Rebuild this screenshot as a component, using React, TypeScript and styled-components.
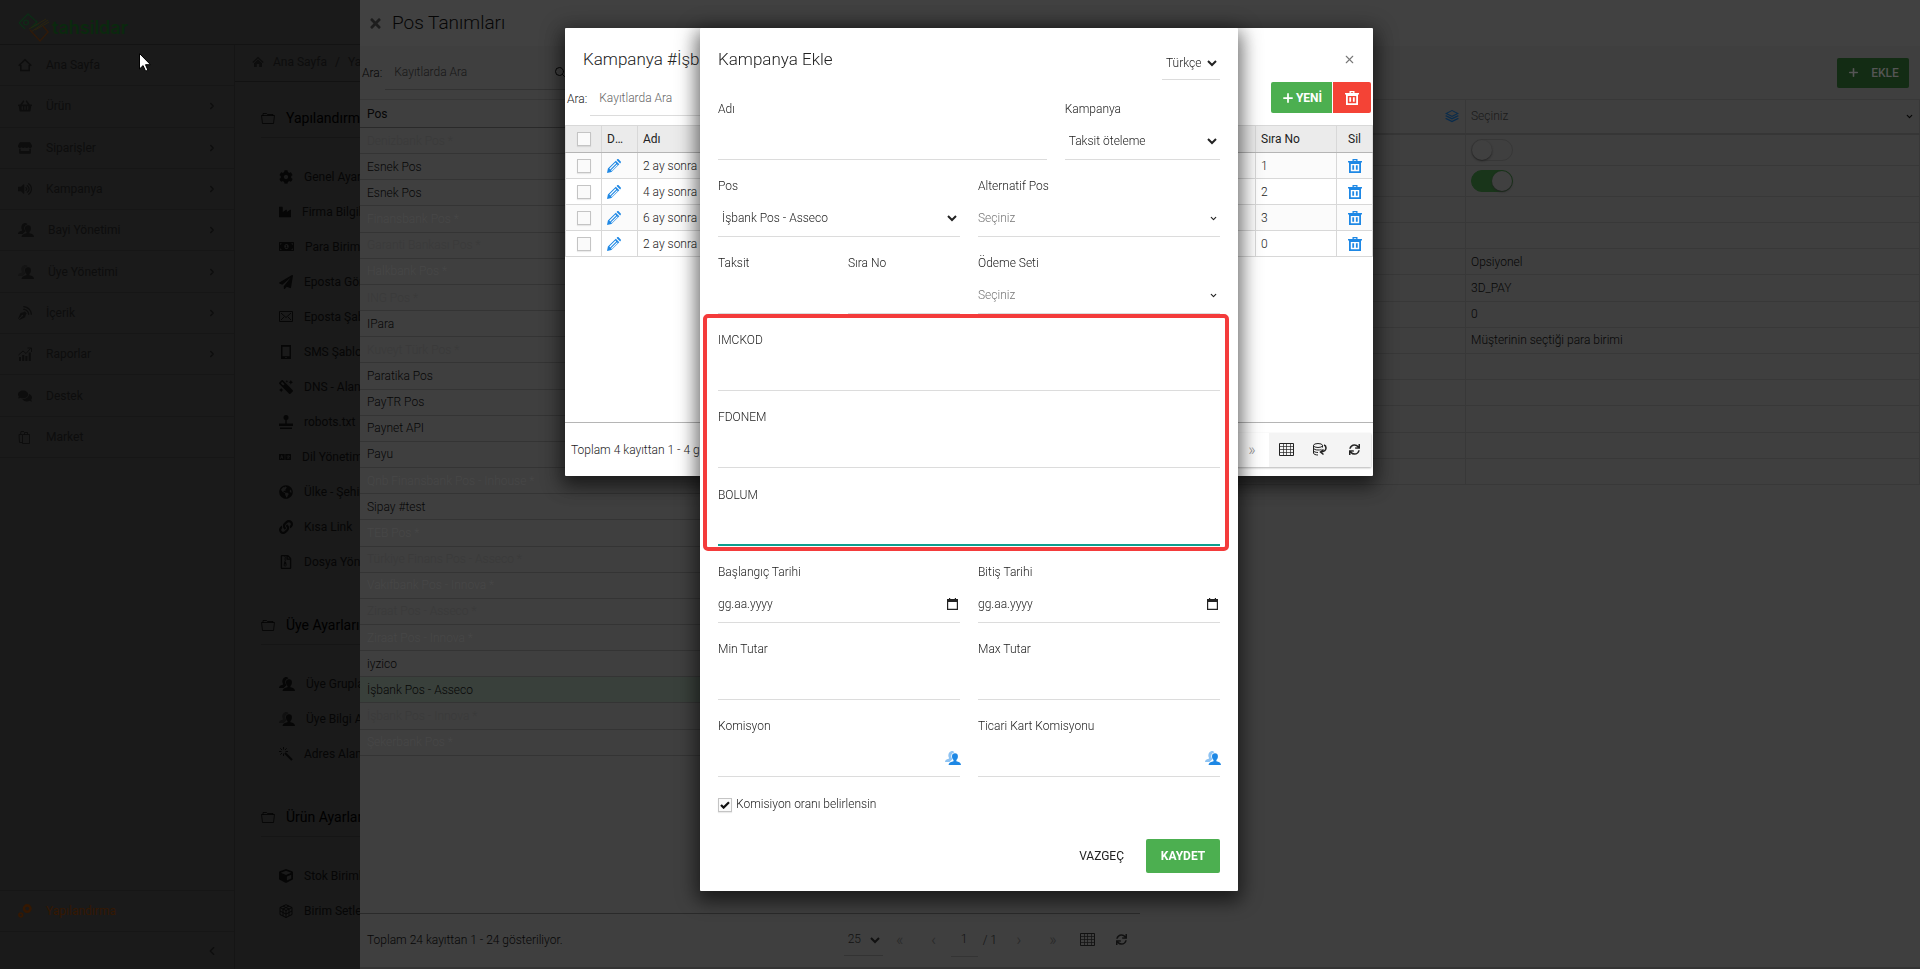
import React, { useId } from "react";
import styled, { createGlobalStyle, css } from "styled-components";
import {
  FaCog,
  FaComments,
  FaCube,
  FaGlobeAmericas,
  FaIndustry,
  FaLink,
  FaMagic,
  FaMoneyBillAlt,
  FaPaperPlane,
  FaRegFileArchive,
  FaShoppingBasket,
  FaStore,
  FaSync,
  FaTimes,
  FaVolumeUp,
  FaLanguage,
} from "react-icons/fa";
import { ImBlog, ImStack } from "react-icons/im";
import { ChevronDown, ChevronLeft, ChevronRight, Plus, Search, X } from "lucide-react";

const GlobalStyle = createGlobalStyle`
  *, *::before, *::after { box-sizing: border-box; }
  body {
    margin: 0;
    background: #1a1a1a;
    font-family: Roboto, "Liberation Sans", sans-serif;
    font-size: 12px;
    line-height: 20px;
    color: #333;
  }
  button, input, select { font: inherit; color: inherit; }
  button { cursor: pointer; border: 0; background: none; padding: 0; }
  a { color: inherit; text-decoration: none; }
  ul { list-style: none; margin: 0; padding: 0; }
  h1, h2, h3, p { margin: 0; font-weight: inherit; }
  svg { display: block; flex: none; }
`;

/* ---------- icons ---------- */

const HomeIcon = () => (
  <svg width="14" height="14" viewBox="0 0 14 14" fill="none" stroke="currentColor" strokeWidth="1.5">
    <path d="M.7 7.8 7 1.8l6.3 6M2.8 7v5.6h8.4V7" />
  </svg>
);

const SolidHomeIcon = () => (
  <svg width="12" height="12" viewBox="0 0 12 12" fill="currentColor">
    <path d="M6 .8 11.6 6l-.8.9L6 2.6 1.2 6.900.4 6zM6 3.600 10 7.200V11H7.200V8H4.800v3H2V7.200z" />
  </svg>
);

const PeopleIcon = ({ faded = false }: { faded?: boolean }) => (
  <svg width="16" height="14" viewBox="0 0 16 14" fill="currentColor">
    <path
      opacity={faded ? 0.5 : 1}
      d="M6 .3c1.500-.5 3 0 3.300 1.300C7 1.800 6.200 3.600 6.300 5.400c.1 1.200.5 2.100 1.100 2.900L4.600 10.900H0c0-1.600 1-2.400 3.900-3.200V6.500C3 5.500 2.900 1.200 6 .3z"
    />
    <path d="M10 2.200c1.900 0 2.900 1.200 2.900 3 0 1.600-.6 3-1.500 3.700v1.300c2.900.6 4.400 1.500 4.600 3.800H3.600c.2-2.300 1.900-3.200 4.900-3.800V8.900C7.600 8.200 7 6.800 7 5.200c0-1.800 1.100-3 3-3z" />
  </svg>
);

const ReportIcon = () => (
  <svg width="14" height="14" viewBox="0 0 14 14" fill="currentColor">
    <path d="M1 10h2v4H1zM4.200 8h2v6h-2zM7.400 9h2v5h-2zM10.800 5.500h2V14h-2z" />
    <path d="M.5 8 5 4l3 2.500L12.500 1.500M9.500 1h4v4" fill="none" stroke="currentColor" />
  </svg>
);

const BagsIcon = () => (
  <svg width="14" height="14" viewBox="0 0 14 14" fill="none" stroke="currentColor">
    <path d="M4.500 4.500h7v9h-7zM6.500 4.500v-2h3v2M4.500 12.500h-3l-.5-8h3M2.500 4.500l.5-3h3" />
  </svg>
);

const GearsIcon = () => (
  <svg width="14" height="14" viewBox="0 0 14 14" fill="none" stroke="currentColor">
    <circle cx="9.200" cy="4.600" r="3.200" strokeWidth="2.600" />
    <circle cx="2.800" cy="11" r="1.800" strokeWidth="1.800" />
  </svg>
);

const FolderIcon = () => (
  <svg width="14" height="12" viewBox="0 0 14 12" fill="none" stroke="currentColor" strokeOpacity="0.7">
    <path d="M.5 3.500h13l-1 8h-11zM2 3.500v-2h3.500l1 1H12v1" />
  </svg>
);

const EnvelopeIcon = () => (
  <svg width="14" height="11" viewBox="0 0 14 11" fill="none" stroke="currentColor">
    <path d="M.5.5h13v10H.5zM2 2l5 4.500L12 2M2 9l3-3M12 9 9 6" />
  </svg>
);

const TabletIcon = () => (
  <svg width="14" height="14" viewBox="0 0 14 14" fill="currentColor">
    <path fillRule="evenodd" d="M2 0h10v14H2zM3.500 1.800v9.400h7V1.800zM6.300 12v1h1.400v-1z" />
  </svg>
);

const StampIcon = () => (
  <svg width="14" height="14" viewBox="0 0 14 14" fill="currentColor">
    <circle cx="7" cy="2.500" r="2.500" />
    <path d="M6.300 4h1.400v4.500H14V11H0V8.500h6.300zM1 12.500h12V14H1z" />
  </svg>
);

const WandIcon = () => (
  <svg width="14" height="14" viewBox="0 0 14 14" fill="none" stroke="currentColor">
    <path d="M6 6l7 7" strokeWidth="2" />
    <path d="M4.500 0v2.500M4.500 6.500V9M0 4.500h2.500M6.500 4.500H9M1.300 1.300 3 3M7.700 1.300 6 3M1.300 7.700 3 6" />
  </svg>
);

const CubesIcon = () => (
  <svg width="14" height="14" viewBox="0 0 14 14" fill="none" stroke="currentColor">
    <path d="M7 .7 13 3.500v7l-6 3-6-3v-7zM1 3.500l6 3 6-3M7 6.500v7M4 2l6 3v7M10 2 4 5v7M1 7l6 3 6-3" />
  </svg>
);

const PencilIcon = () => (
  <svg width="14" height="14" viewBox="0 0 14 14">
    <path fill="#1e88e5" fillRule="evenodd" d="M0 14 .9 9.600 8.800 1.700l3.500 3.500-7.900 7.900zM2.400 9.600l.8.800 6-6-.8-.8zM4 11.200l.7.700 6-6-.7-.7zM9.600.9l.6-.6c.5-.4 1-.4 1.400 0l2.100 2.100c.4.400.4.900 0 1.400l-.6.6z" />
  </svg>
);

const TrashIcon = () => (
  <svg width="14" height="14" viewBox="0 0 14 14" fill="currentColor">
    <path fillRule="evenodd" d="M4.500 0h5v2H14v1.600h-1V14H1V3.600H0V2h4.500zM5.800 1.200V2h2.400v-.8zM2.800 5v7.300h8.400V5z" />
    <path d="M4.300 6.200h1.800v4.600H4.300zM7.900 6.200h1.800v4.600H7.900z" />
  </svg>
);

const GridIcon = () => (
  <svg width="15" height="13" viewBox="0 0 15 13" fill="none" stroke="currentColor">
    <path d="M.5.500h14v12H.5z" />
    <path d="M.5 3.500h14M.5 6.500h14M.5 9.500h14M4.500.500v12M7.500.500v12M11.500.500v12" strokeOpacity="0.7" />
  </svg>
);

const DatabaseIcon = () => (
  <svg width="14" height="13" viewBox="0 0 14 13" fill="none" stroke="currentColor">
    <ellipse cx="5" cy="2.500" rx="4.500" ry="2" />
    <path d="M.5 2.500v7.500c0 1.200 2 2 4.500 2M9.500 2.500v2M.5 5c0 1.200 2 2 4.500 2s3-.3 3.500-.7M.5 7.500c0 1.200 2 2 4.500 2" />
    <path d="M11 2c2.500 1 3.500 6-2.500 7M10.500 6.500 7.500 9l3 2.500" strokeWidth="1.500" />
  </svg>
);

const CalendarIcon = () => (
  <svg width="11" height="12" viewBox="0 0 11 12">
    <path fill="#222" fillRule="evenodd" d="M2 0h1.200v1h4.600V0H9v1h2v11H0V1h2zM1.200 4v6.800h8.600V4z" />
  </svg>
);

const CheckIcon = () => (
  <svg width="10" height="8" viewBox="0 0 10 8" fill="none" stroke="#111" strokeWidth="2.200">
    <path d="M1 4l2.600 2.600L9 1.200" />
  </svg>
);

const LogoMark = () => (
  <svg width="32" height="30" viewBox="0 0 32 30" fill="none">
    <path d="M1 10 10 1l9 8-6 6 8-4M1 10l6 6" stroke="#0d2c16" strokeWidth="1.500" />
    <circle cx="8" cy="9.500" r="2.400" stroke="#0d2c16" strokeWidth="1.300" />
    <path d="M30 7 13 19M28 6 11 16M31 9 17 17" stroke="#2a240f" />
    <path d="M12 17 22 28l8-9-5-6" stroke="#301a09" strokeWidth="1.500" />
  </svg>
);

/* ---------- background page ---------- */

const Page = styled.div`
  min-height: 100vh;
  display: flex;
  flex-direction: column;
  color: #0d0d0d;
`;

const TopBar = styled.header`
  height: 45px;
  padding: 13px 18px 0;
  display: flex;
  align-items: flex-start;
  gap: 2px;
  border-bottom: 1px solid #131313;
`;

const Brand = styled.span`
  padding-top: 5px;
  font-family: Inter, Roboto, sans-serif;
  font-size: 18px;
  font-weight: 600;
  color: #0a290e;
`;

const Columns = styled.div`
  flex: 1;
  display: flex;
`;

const Sidebar = styled.nav`
  width: 235px;
  display: flex;
  flex-direction: column;
  border-right: 1px solid #151515;
`;

const Menu = styled.ul`
  display: grid;
  grid-auto-rows: 1fr;
  min-height: 413px;
`;

const MenuItem = styled.li<{ $active?: boolean; $top?: boolean }>`
  display: flex;
  border-bottom: 1px solid #161616;
  ${(p) => p.$top && css`margin-top: auto; border-top: 1px solid #161616; height: 42px;`}
  color: ${(p) => (p.$active ? "#351802" : "inherit")};
`;

const MenuLink = styled.a`
  flex: 1;
  display: flex;
  align-items: center;
  gap: 14px;
  padding: 0 17px 0 18px;
  & > span { flex: 1; }
`;

const Collapse = styled.button`
  height: 37px;
  padding: 0 15px;
  display: flex;
  align-items: center;
  justify-content: flex-end;
`;

const Content = styled.main`
  flex: 1;
`;

const Breadcrumb = styled.div`
  height: 37px;
  padding: 0 17px 2px;
  display: flex;
  align-items: center;
  gap: 8px;
  border-bottom: 1px solid #121212;
  & > a:first-child { display: flex; gap: 9px; align-items: center; }
`;

const Section = styled.section`
  padding: 24px 26px 0;
`;

const SectionTitle = styled.h2`
  height: 32px;
  display: flex;
  align-items: flex-start;
  gap: 11px;
  font-size: 14px;
  line-height: 24px;
  font-weight: 400;
  color: #000;
  border-bottom: 1px solid #151515;
  & > svg { margin-top: 6px; }
`;

const SettingList = styled.ul`
  padding: 21px 18px 10px;
`;

const SettingLink = styled.a`
  height: 35px;
  display: flex;
  align-items: center;
  gap: 11px;
  color: #060606;
`;

/* ---------- drawer ---------- */

const Drawer = styled.section`
  position: fixed;
  inset: 0 0 0 360px;
  display: flex;
  flex-direction: column;
  background: #3f3f3f;
  color: #060606;
  font-weight: 300;
`;

const DrawerHead = styled.header`
  height: 46px;
  padding: 0 8px;
  display: flex;
  align-items: center;
  gap: 9px;
  background: #414141;
  & h1 { font-size: 19px; line-height: 24px; color: #060606; }
  & button { color: #1d1d1d; }
`;

const DrawerBody = styled.div`
  flex: 1;
  display: flex;
`;

const ListPane = styled.div`
  flex: 1;
  min-width: 0;
  display: flex;
  flex-direction: column;
  border-bottom: 2px solid #343434;
`;

const DetailPane = styled.div`
  flex: 1;
  min-width: 0;
  border-bottom: 2px solid #343434;
`;

const SearchBar = styled.div<{ $dark?: boolean }>`
  display: flex;
  align-items: center;
  gap: 3px;
  padding: 0 2px;
  & > div {
    width: 183px;
    display: flex;
    align-items: center;
    padding: 0 2px 0 9px;
    border-bottom: 1px solid ${(p) => (p.$dark ? "#323232" : "#dcdcdc")};
  }
  & input {
    flex: 1;
    min-width: 0;
    height: 34px;
    padding: 0;
    border: 0;
    outline: 0;
    background: transparent;
  }
  & input::placeholder { color: ${(p) => (p.$dark ? "#171717" : "#666")}; opacity: 1; }
`;

const DrawerTools = styled.div`
  height: 53px;
  padding: 0 11px 0 0;
  display: flex;
  align-items: center;
  justify-content: space-between;
`;

const PosTable = styled.table`
  width: 100%;
  height: 657px;
  border-collapse: collapse;
  border-top: 1px solid #373737;
  & th {
    height: 28px;
    padding: 0 7px;
    text-align: left;
    font-weight: 400;
    border-bottom: 1px solid #2a2a2a;
  }
  & td { padding: 0 7px; border-bottom: 1px solid #343434; }
`;

const PosRow = styled.tr<{ $tone: Tone }>`
  color: ${(p) => ({ normal: "#060606", soft: "#474747", ghost: "#3a3a3a", selected: "#060606" })[p.$tone]};
  background: ${(p) => (p.$tone === "selected" ? "#39403b" : "transparent")};
`;

const PagerBar = styled.footer`
  display: flex;
  align-items: center;
  justify-content: space-between;
`;

const DrawerPager = styled(PagerBar)`
  margin-top: auto;
  height: 54px;
  padding: 0 2px 2px 7px;
  border-top: 1px solid #2a2a2a;
`;

const PagerControls = styled.div`
  display: flex;
  align-items: center;
  color: #111;
`;

const PageCount = styled.span`
  margin: 0 5px;
`;

const PagerButton = styled.button<{ $muted?: boolean; $fill?: string }>`
  width: 34px;
  height: 34px;
  display: flex;
  align-items: center;
  justify-content: center;
  font-size: 16px;
  background: ${(p) => p.$fill ?? "transparent"};
  opacity: ${(p) => (p.$muted ? 0.5 : 1)};
`;

const PageSize = styled.select`
  width: 39px;
  height: 32px;
  padding: 0;
  border: 0;
  border-bottom: 1px solid #333;
  background: transparent;
`;

const PageInput = styled.input`
  width: 27px;
  height: 34px;
  padding: 0;
  text-align: center;
  border: 0;
  border-bottom: 1px solid #343434;
  background: transparent;
`;

const PropTable = styled.table`
  width: 100%;
  height: 386px;
  border-collapse: collapse;
  table-layout: fixed;
  & td {
    padding: 0 5px;
    border: 1px solid #383838;
  }
`;

const PropRow = styled.tr<{ $height: number; $head?: boolean }>`
  & > td {
    height: ${(p) => p.$height}px;
    ${(p) => p.$head && css`border-bottom: 2px solid #363636;`}
  }
`;

const LayersCell = styled.div`
  display: flex;
  justify-content: flex-end;
  padding-right: 1px;
  color: #0a2c4c;
`;

const DarkSelect = styled.div`
  display: flex;
  align-items: center;
  & > select {
    flex: 1;
    appearance: none;
    height: 30px;
    padding: 0;
    border: 0;
    background: transparent;
    color: #1a1a1a;
  }
`;

const Toggle = styled.input`
  appearance: none;
  display: block;
  width: 42px;
  height: 22px;
  margin: 0;
  border-radius: 11px;
  border: 1px solid #373737;
  &::before {
    content: "";
    display: block;
    width: 20px;
    height: 20px;
    border-radius: 50%;
    background: #404040;
    box-shadow: 0 1px 2px #222;
  }
  &:checked { background: #19351a; border-color: #19351a; }
  &:checked::before { margin-left: 20px; }
`;

const AddButton = styled.button`
  width: 72px;
  height: 30px;
  display: flex;
  align-items: center;
  justify-content: center;
  gap: 11px;
  border-radius: 2px;
  background: #132c14;
  color: #555;
  font-weight: 500;
`;

/* ---------- dialogs ---------- */

const Overlay = styled.div`
  position: fixed;
  inset: 0;
  padding: 28px 0 0 18px;
  display: flex;
  align-items: flex-start;
  justify-content: center;
`;

const Dialog = styled.section<{ $width: number }>`
  width: ${(p) => p.$width}px;
  background: #fff;
  color: #222;
  font-weight: 300;
  border-radius: 1px;
  box-shadow: 0 8px 17px 2px rgba(0, 0, 0, 0.4), 0 4px 22px 4px rgba(0, 0, 0, 0.3);
`;

const DialogTitle = styled.h2`
  font-size: 17px;
  line-height: 26px;
  color: #222;
`;

const ListDialogHead = styled.header`
  height: 53px;
  padding: 9px 17px 0 18px;
  display: flex;
  align-items: center;
  justify-content: space-between;
  & button { color: #777; }
`;

const ListTools = styled.div`
  height: 44px;
  padding-right: 2px;
  display: flex;
  align-items: flex-start;
  justify-content: space-between;
`;

const ButtonGroup = styled.div`
  display: flex;
  gap: 1px;
  & > button {
    height: 31px;
    margin-top: 1px;
    display: flex;
    align-items: center;
    justify-content: center;
    color: #fff;
    font-weight: 700;
  }
`;

const NewButton = styled.button`
  width: 61px;
  gap: 1px;
  border-radius: 2px 0 0 2px;
  background: #4caf50;
`;

const DeleteButton = styled.button`
  width: 38px;
  border-radius: 0 2px 2px 0;
  background: #f44336;
`;

const CampaignTable = styled.table`
  width: 100%;
  table-layout: fixed;
  border-collapse: collapse;
  & th, & td {
    height: 26px;
    padding: 0 5px;
    text-align: left;
    border: 1px solid #d8d8d8;
    white-space: nowrap;
    overflow: hidden;
    text-overflow: ellipsis;
  }
  & th { height: 27px; background: #ebebeb; font-weight: 400; border-bottom-color: #b5b5b5; }
  & th:nth-child(2) { padding-right: 11px; }
  & th:last-child { text-align: center; }
  & tbody tr:nth-child(odd) { background: #fbfbfb; }
`;

const CellCenter = styled.div`
  display: flex;
  justify-content: center;
`;

const RowAction = styled.button<{ $center?: boolean }>`
  width: 100%;
  display: flex;
  justify-content: ${(p) => (p.$center ? "center" : "flex-start")};
  color: #1e88e5;
`;

const CheckBox = styled.input`
  appearance: none;
  display: block;
  width: 14px;
  height: 14px;
  margin: 0;
  border: 1px solid #c4c4c4;
  background: #fafafa;
  box-shadow: 0 1px 1px rgba(0, 0, 0, 0.08);
`;

const ListBody = styled.div`
  min-height: 298px;
  border-bottom: 1px solid #b5b5b5;
`;

const ListPager = styled(PagerBar)`
  height: 53px;
  padding: 0 2px 0 6px;
  & ${PagerControls} { color: #222; box-shadow: 0 1px 2px rgba(0, 0, 0, 0.3); }
`;

const FormDialog = styled(Dialog)`
  padding: 18px;
`;

const FormHead = styled.header`
  display: flex;
  align-items: flex-start;
  justify-content: space-between;
  height: 53px;
`;

const LanguageSelect = styled.select`
  width: 58px;
  height: 34px;
  padding: 0;
  border: 0;
  border-bottom: 1px solid #dcdcdc;
  background: transparent;
`;

const FormGrid = styled.div`
  position: relative;
  min-height: 694px;
  display: grid;
  grid-template-columns: repeat(12, 1fr);
  grid-auto-rows: 1fr;
  column-gap: 18px;
`;

const FieldBox = styled.div<{ $span: number }>`
  grid-column: span ${(p) => p.$span};
  display: flex;
  flex-direction: column;
  gap: 4px;
  min-width: 0;
`;

const ControlLine = styled.div<{ $focus?: boolean }>`
  height: 37px;
  display: flex;
  align-items: center;
  border-bottom: ${(p) => (p.$focus ? "2px solid #0d9f8e" : "1px solid #dcdcdc")};
  & > input, & > select {
    flex: 1;
    min-width: 0;
    height: 36px;
    padding: 0;
    border: 0;
    outline: 0;
    background: transparent;
  }
  & > input::placeholder { color: #222; opacity: 1; }
  & > svg { margin-right: 2px; }
`;

const PlainSelect = styled.select`
  appearance: none;
  color: #777;
`;

const UserAddon = styled.button`
  color: #1e88e5;
  width: 15px;
`;

const Highlight = styled.div`
  position: absolute;
  left: -15px;
  right: -9px;
  top: 215px;
  height: 237px;
  border: 4px solid #f43b3b;
  border-radius: 5px;
  pointer-events: none;
`;

const CheckRow = styled.div`
  height: 41px;
  padding-top: 1px;
  display: flex;
  align-items: flex-start;
  gap: 4px;
`;

const CheckMark = styled.span`
  position: relative;
  padding-top: 4px;
  & > svg { position: absolute; left: 2px; top: 7px; pointer-events: none; }
`;

const FormActions = styled.footer`
  display: flex;
  justify-content: flex-end;
  gap: 22px;
  padding-top: 5px;
  font-weight: 400;
`;

const SaveButton = styled.button`
  width: 74px;
  height: 34px;
  border-radius: 2px;
  background: #4caf50;
  color: #fff;
  font-weight: 700;
`;

const Pointer = styled.svg`
  position: fixed;
  left: 139px;
  top: 53px;
`;

/* ---------- data ---------- */

type Tone = "normal" | "soft" | "ghost" | "selected";

const menu: [React.ReactNode, string, boolean][] = [
  [<HomeIcon />, "Ana Sayfa", false],
  [<FaShoppingBasket size={14} />, "Ürün", true],
  [<FaStore size={14} />, "Siparişler", true],
  [<FaVolumeUp size={14} />, "Kampanya", true],
  [<PeopleIcon />, "Bayi Yönetimi", true],
  [<PeopleIcon faded />, "Üye Yönetimi", true],
  [<ImBlog size={14} />, "İçerik", true],
  [<ReportIcon />, "Raporlar", true],
  [<FaComments size={14} />, "Destek", false],
  [<BagsIcon />, "Market", false],
];

const sections: [string, [React.ReactNode, string][]][] = [
  ["Yapılandırma", [
    [<FaCog size={14} />, "Genel Ayarlar"],
    [<FaIndustry size={12} />, "Firma Bilgileri"],
    [<FaMoneyBillAlt size={15} />, "Para Birimleri"],
    [<FaPaperPlane size={14} />, "Eposta Gönderim"],
    [<EnvelopeIcon />, "Eposta Şablonları"],
    [<TabletIcon />, "SMS Şablonları"],
    [<FaMagic size={14} transform="scale(-1 1)" />, "DNS - Alan Adı"],
    [<StampIcon />, "robots.txt"],
    [<FaLanguage size={12} />, "Dil Yönetimi"],
    [<FaGlobeAmericas size={14} />, "Ülke - Şehir"],
    [<FaLink size={14} />, "Kısa Link"],
    [<FaRegFileArchive size={14} />, "Dosya Yönetimi"],
  ]],
  ["Üye Ayarları", [
    [<PeopleIcon />, "Üye Grupları"],
    [<PeopleIcon faded />, "Üye Bilgi Alanları"],
    [<WandIcon />, "Adres Alanları"],
  ]],
  ["Ürün Ayarları", [
    [<FaCube size={14} />, "Stok Birimleri"],
    [<CubesIcon />, "Birim Setleri"],
  ]],
];

const posRows: [string, Tone][] = [
  ["Denizbank Pos *", "ghost"],
  ["Esnek Pos", "normal"],
  ["Esnek Pos", "normal"],
  ["Finansbank Pos *", "soft"],
  ["Garanti Bankası Pos *", "ghost"],
  ["Halkbank Pos *", "soft"],
  ["ING Pos *", "ghost"],
  ["IPara", "normal"],
  ["Kuveyt Türk Pos *", "ghost"],
  ["Paratika Pos", "normal"],
  ["PayTR Pos", "normal"],
  ["Paynet API", "normal"],
  ["Payu", "normal"],
  ["Qnb Finansbank Pos - Inhouse *", "soft"],
  ["Sipay #test", "normal"],
  ["TEB Pos *", "soft"],
  ["Türkiye Finans Pos - Asseco *", "ghost"],
  ["Vakıfbank Pos - Innova *", "soft"],
  ["Ziraat Pos - Asseco *", "ghost"],
  ["Ziraat Pos - Innova *", "soft"],
  ["iyzico", "normal"],
  ["İşbank Pos - Asseco", "selected"],
  ["İşbank Pos - Innova *", "ghost"],
  ["Şekerbank Pos *", "soft"],
];

const propValues = ["", "", "Opsiyonel", "3D_PAY", "0", "Müşterinin seçtiği para birimi", "", "", "", "", ""];

const campaigns: [string, string][] = [
  ["2 ay sonra öde", "1"],
  ["4 ay sonra öde", "2"],
  ["6 ay sonra öde", "3"],
  ["2 ay sonra öde", "0"],
];

/* ---------- form field ---------- */

type FieldProps = {
  label: string;
  span: number;
  kind?: "text" | "select" | "plain" | "date" | "user";
  value?: string;
  focus?: boolean;
};

function Field({ label, span, kind = "text", value = "", focus }: FieldProps) {
  const id = useId();
  return (
    <FieldBox $span={span}>
      <label htmlFor={id}>{label}</label>
      <ControlLine $focus={focus}>
        {kind === "select" && (
          <select id={id}><option>{value}</option></select>
        )}
        {kind === "plain" && (
          <>
            <PlainSelect id={id}><option>Seçiniz</option></PlainSelect>
            <ChevronDown size={9} strokeWidth={3} />
          </>
        )}
        {(kind === "text" || kind === "user") && <input id={id} type="text" />}
        {kind === "date" && (
          <>
            <input id={id} type="text" placeholder="gg.aa.yyyy" />
            <CalendarIcon />
          </>
        )}
        {kind === "user" && (
          <UserAddon type="button" aria-label="Üye grubu"><PeopleIcon faded /></UserAddon>
        )}
      </ControlLine>
    </FieldBox>
  );
}

export default function App() {
  return (
    <>
      <GlobalStyle />
      <Page>
        <TopBar>
          <LogoMark />
          <Brand>tahsildar</Brand>
        </TopBar>
        <Columns>
          <Sidebar>
            <Menu>
              {menu.map(([icon, text, more]) => (
                <MenuItem key={text}>
                  <MenuLink href="#">
                    {icon}
                    <span>{text}</span>
                    {more && <ChevronRight size={10} strokeWidth={3} />}
                  </MenuLink>
                </MenuItem>
              ))}
            </Menu>
            <MenuItem as="div" $active $top>
              <MenuLink href="#"><GearsIcon /><span>Yapılandırma</span></MenuLink>
            </MenuItem>
            <Collapse type="button" aria-label="Menüyü daralt"><ChevronLeft size={14} /></Collapse>
          </Sidebar>
          <Content>
            <Breadcrumb>
              <a href="#"><SolidHomeIcon />Ana Sayfa</a>
              <span>/</span>
              <a href="#">Yapılandırma</a>
            </Breadcrumb>
            {sections.map(([title, items]) => (
              <Section key={title}>
                <SectionTitle><FolderIcon />{title}</SectionTitle>
                <SettingList>
                  {items.map(([icon, text]) => (
                    <li key={text}><SettingLink href="#">{icon}{text}</SettingLink></li>
                  ))}
                </SettingList>
              </Section>
            ))}
          </Content>
        </Columns>
      </Page>

      <Drawer>
        <DrawerHead>
          <button type="button" aria-label="Kapat"><FaTimes size={15} /></button>
          <h1>Pos Tanımları</h1>
        </DrawerHead>
        <DrawerBody>
          <ListPane>
            <DrawerTools>
              <SearchBar $dark>
                <label htmlFor="pos-search">Ara:</label>
                <div>
                  <input id="pos-search" placeholder="Kayıtlarda Ara" />
                  <Search size={12} />
                </div>
              </SearchBar>
            </DrawerTools>
            <PosTable>
              <thead><tr><th>Pos</th></tr></thead>
              <tbody>
                {posRows.map(([name, tone], i) => (
                  <PosRow key={i} $tone={tone}><td>{name}</td></PosRow>
                ))}
              </tbody>
            </PosTable>
            <DrawerPager>
              <span>Toplam 24 kayıttan 1 - 24 gösteriliyor.</span>
              <PagerControls>
                <PageSize aria-label="Sayfa boyutu"><option>25</option></PageSize>
                <PagerButton type="button" $muted>«</PagerButton>
                <PagerButton type="button" $muted>‹</PagerButton>
                <PageInput aria-label="Sayfa" defaultValue="1" />
                <PageCount>/ 1</PageCount>
                <PagerButton type="button" $muted>›</PagerButton>
                <PagerButton type="button" $muted>»</PagerButton>
                <PagerButton type="button" aria-label="Tablo"><GridIcon /></PagerButton>
                <PagerButton type="button" aria-label="Yenile"><FaSync size={11} /></PagerButton>
              </PagerControls>
            </DrawerPager>
          </ListPane>
          <DetailPane>
            <DrawerTools>
              <span />
              <AddButton type="button"><Plus size={13} strokeWidth={3} />EKLE</AddButton>
            </DrawerTools>
            <PropTable>
              <colgroup><col width="325" /><col /></colgroup>
              <tbody>
                <PropRow $height={34} $head>
                  <td><LayersCell><ImStack size={14} /></LayersCell></td>
                  <td>
                    <DarkSelect>
                      <select aria-label="Seçiniz"><option>Seçiniz</option></select>
                      <ChevronDown size={9} strokeWidth={3} />
                    </DarkSelect>
                  </td>
                </PropRow>
                <PropRow $height={31}><td /><td><Toggle type="checkbox" aria-label="Test modu" /></td></PropRow>
                <PropRow $height={31}><td /><td><Toggle type="checkbox" aria-label="Aktif" defaultChecked /></td></PropRow>
                {propValues.map((v, i) => (
                  <PropRow key={i} $height={26}><td /><td>{v}</td></PropRow>
                ))}
              </tbody>
            </PropTable>
          </DetailPane>
        </DrawerBody>
      </Drawer>

      <Overlay>
        <Dialog $width={808} role="dialog" aria-label="Kampanya">
          <ListDialogHead>
            <DialogTitle>Kampanya #İşbank Pos - Asseco</DialogTitle>
            <button type="button" aria-label="Kapat"><X size={13} strokeWidth={2} /></button>
          </ListDialogHead>
          <ListTools>
            <SearchBar>
              <label htmlFor="campaign-search">Ara:</label>
              <div><input id="campaign-search" placeholder="Kayıtlarda Ara" /></div>
            </SearchBar>
            <ButtonGroup>
              <NewButton type="button"><Plus size={14} strokeWidth={3} />YENİ</NewButton>
              <DeleteButton type="button" aria-label="Sil"><TrashIcon /></DeleteButton>
            </ButtonGroup>
          </ListTools>
          <ListBody>
            <CampaignTable>
              <colgroup>
                <col width="36" /><col width="36" /><col /><col width="100" /><col width="81" /><col width="36" />
              </colgroup>
              <thead>
                <tr>
                  <th><CellCenter><CheckBox type="checkbox" aria-label="Tümünü seç" /></CellCenter></th>
                  <th>Düzenle</th>
                  <th>Adı</th>
                  <th>Taksit</th>
                  <th>Sıra No</th>
                  <th>Sil</th>
                </tr>
              </thead>
              <tbody>
                {campaigns.map(([name, order], i) => (
                  <tr key={i}>
                    <td><CellCenter><CheckBox type="checkbox" aria-label="Seç" /></CellCenter></td>
                    <td><RowAction type="button" aria-label="Düzenle"><PencilIcon /></RowAction></td>
                    <td>{name}</td>
                    <td />
                    <td>{order}</td>
                    <td><RowAction type="button" $center aria-label="Sil"><TrashIcon /></RowAction></td>
                  </tr>
                ))}
              </tbody>
            </CampaignTable>
          </ListBody>
          <ListPager>
            <span>Toplam 4 kayıttan 1 - 4 gösteriliyor.</span>
            <PagerControls>
              <PagerButton type="button" $muted>»</PagerButton>
              <PagerButton type="button" $fill="#f4f4f4" aria-label="Tablo"><GridIcon /></PagerButton>
              <PagerButton type="button" $fill="#f4f4f4" aria-label="Veri"><DatabaseIcon /></PagerButton>
              <PagerButton type="button" $fill="#f4f4f4" aria-label="Yenile"><FaSync size={11} /></PagerButton>
            </PagerControls>
          </ListPager>
        </Dialog>
      </Overlay>

      <Overlay>
        <FormDialog $width={538} role="dialog" aria-label="Kampanya Ekle">
          <FormHead>
            <DialogTitle>Kampanya Ekle</DialogTitle>
            <LanguageSelect aria-label="Dil"><option>Türkçe</option></LanguageSelect>
          </FormHead>
          <FormGrid>
            <Field label="Adı" span={8} />
            <Field label="Kampanya" span={4} kind="select" value="Taksit öteleme" />
            <Field label="Pos" span={6} kind="select" value="İşbank Pos - Asseco" />
            <Field label="Alternatif Pos" span={6} kind="plain" />
            <Field label="Taksit" span={3} />
            <Field label="Sıra No" span={3} />
            <Field label="Ödeme Seti" span={6} kind="plain" />
            <Field label="IMCKOD" span={12} />
            <Field label="FDONEM" span={12} />
            <Field label="BOLUM" span={12} focus />
            <Field label="Başlangıç Tarihi" span={6} kind="date" />
            <Field label="Bitiş Tarihi" span={6} kind="date" />
            <Field label="Min Tutar" span={6} />
            <Field label="Max Tutar" span={6} />
            <Field label="Komisyon" span={6} kind="user" />
            <Field label="Ticari Kart Komisyonu" span={6} kind="user" />
            <Highlight />
          </FormGrid>
          <CheckRow>
            <CheckMark>
              <CheckBox id="commission" type="checkbox" defaultChecked />
              <CheckIcon />
            </CheckMark>
            <label htmlFor="commission">Komisiyon oranı belirlensin</label>
          </CheckRow>
          <FormActions>
            <button type="button">VAZGEÇ</button>
            <SaveButton type="button">KAYDET</SaveButton>
          </FormActions>
        </FormDialog>
      </Overlay>

      <Pointer width="12" height="19" viewBox="0 0 12 19">
        <path d="M.5.5v15.500l3.600-3.400L6.600 18.200l2.300-1-2.400-5.500h5z" fill="#fff" stroke="#000" />
      </Pointer>
    </>
  );
}
